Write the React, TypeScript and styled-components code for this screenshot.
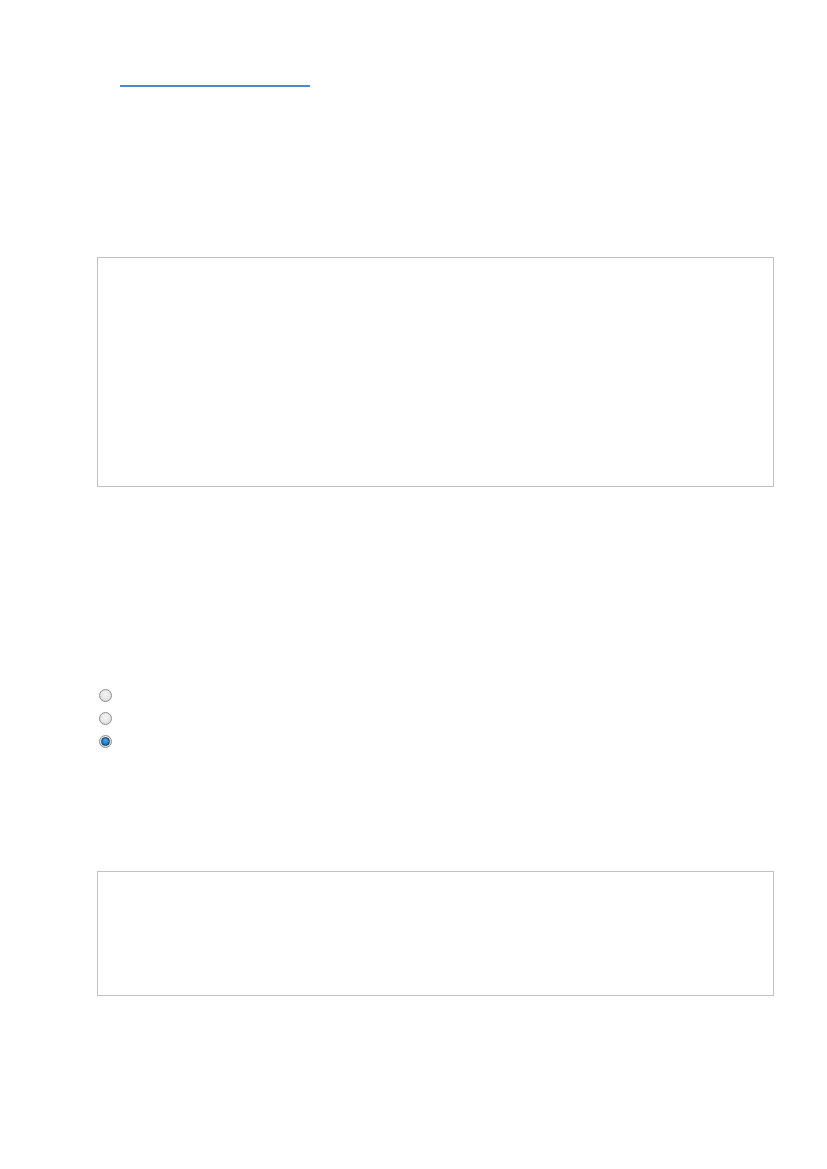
import React from "react";
import styled, { createGlobalStyle } from "styled-components";

const Global = createGlobalStyle`
  html, body { margin: 0; padding: 0; background: #ffffff; }
  body { font-family: "Liberation Sans", Arial, sans-serif; font-size: 13px; color: #333; }
`;

const Page = styled.div`
  padding: 70px 53px 120px 97px;
  display: flex;
  flex-direction: column;
`;

const LinkRow = styled.div`
  height: 17px;
  display: flex;
`;

const EmptyLink = styled.a`
  display: inline-block;
  margin-left: 23px;
  width: 190px;
  height: 15px;
  border-bottom: 2px solid #4f88cc;
  color: transparent;
  text-decoration: none;
`;

const Panel = styled.div<{ $top: number; $height: number }>`
  box-sizing: border-box;
  margin-top: ${(p) => p.$top}px;
  height: ${(p) => p.$height}px;
  width: 677px;
  border: 1px solid #c2c2c2;
  background: #fff;
`;

const RadioList = styled.div`
  margin-top: 202px;
  display: flex;
  flex-direction: column;
  gap: 10px;
  padding-left: 2px;
`;

const RadioRow = styled.label`
  display: flex;
  align-items: center;
  height: 13px;
`;

const Radio = styled.span<{ $checked?: boolean }>`
  box-sizing: border-box;
  width: 13px;
  height: 13px;
  border-radius: 50%;
  border: 1px solid #8e8e8e;
  background: radial-gradient(circle at 50% 40%, #f4f4f4 0%, #e6e6e6 55%, #c8c8c8 100%);
  display: flex;
  align-items: center;
  justify-content: center;
  &::after {
    content: "";
    display: ${(p) => (p.$checked ? "block" : "none")};
    box-sizing: border-box;
    width: 9px;
    height: 9px;
    border-radius: 50%;
    border: 1px solid #0b3a63;
    background: radial-gradient(circle at 50% 35%, #4aa8ec 0%, #1c7cc8 60%, #115c9c 100%);
  }
`;

export default function App() {
  return (
    <>
      <Global />
      <Page>
        <LinkRow>
          <EmptyLink href="#">&nbsp;</EmptyLink>
        </LinkRow>
        <Panel $top={170} $height={230} />
        <RadioList>
          <RadioRow>
            <Radio />
          </RadioRow>
          <RadioRow>
            <Radio />
          </RadioRow>
          <RadioRow>
            <Radio $checked />
          </RadioRow>
        </RadioList>
        <Panel $top={123} $height={125} />
      </Page>
    </>
  );
}
